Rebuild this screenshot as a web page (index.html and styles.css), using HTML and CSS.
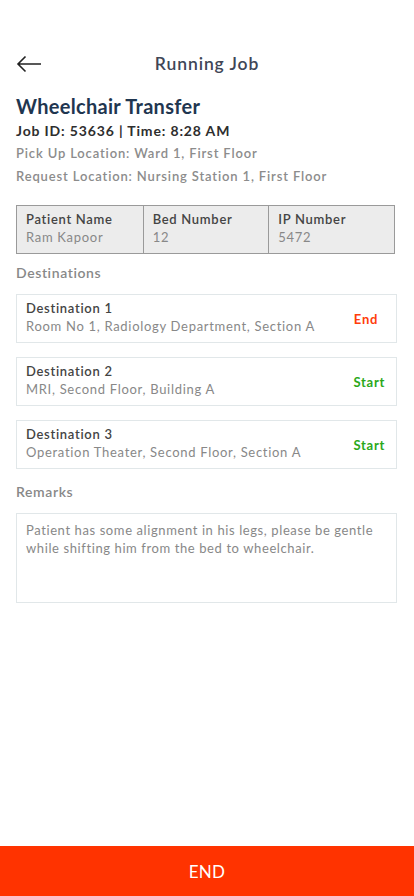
FILE: index.html
```html
<!DOCTYPE html>
<html>
<head>
<meta charset="utf-8">
<link rel="stylesheet" href="styles.css">
</head>
<body>
<div class="page">
  <header class="topbar">
    <span class="back">
      <svg width="26" height="18" viewBox="0 0 26 18"><path d="M25 9H2M9.5 1.5L2 9l7.5 7.5" fill="none" stroke="#222" stroke-width="1.6"/></svg>
    </span>
    <h1 class="title">Running Job</h1>
  </header>
  <main class="content">
    <h2 class="job-name">Wheelchair Transfer</h2>
    <div class="job-id">Job ID: 53636 | Time: 8:28 AM</div>
    <div class="meta">Pick Up Location: Ward 1, First Floor</div>
    <div class="meta">Request Location: Nursing Station 1, First Floor</div>

    <div class="info-table">
      <div class="cell"><div class="cell-h">Patient Name</div><div class="cell-v">Ram Kapoor</div></div>
      <div class="cell"><div class="cell-h">Bed Number</div><div class="cell-v">12</div></div>
      <div class="cell"><div class="cell-h">IP Number</div><div class="cell-v">5472</div></div>
    </div>

    <div class="section-label">Destinations</div>
    <div class="dest-list">
      <div class="dest">
        <div class="dest-text"><div class="dest-title">Destination 1</div><div class="dest-addr">Room No 1, Radiology Department, Section A</div></div>
        <span class="action end">End</span>
      </div>
      <div class="dest">
        <div class="dest-text"><div class="dest-title">Destination 2</div><div class="dest-addr">MRI, Second Floor, Building A</div></div>
        <span class="action start">Start</span>
      </div>
      <div class="dest">
        <div class="dest-text"><div class="dest-title">Destination 3</div><div class="dest-addr">Operation Theater, Second Floor, Section A</div></div>
        <span class="action start">Start</span>
      </div>
    </div>

    <div class="section-label remarks-label">Remarks</div>
    <div class="remarks">Patient has some alignment in his legs, please be gentle while shifting him from the bed to wheelchair.</div>
  </main>
  <button class="end-btn">END</button>
</div>
</body>
</html>
```
FILE: styles.css
```css
* { box-sizing: border-box; }
html, body { margin: 0; padding: 0; }
body {
  font-family: Lato, "Noto Sans", sans-serif;
  background: #fff;
  color: #333;
  letter-spacing: 0.7px;
}
.page {
  width: 414px;
  height: 896px;
  display: flex;
  flex-direction: column;
}
.topbar {
  position: relative;
  height: 40px;
  margin-top: 44px;
  display: flex;
  align-items: center;
  justify-content: center;
}
.back {
  position: absolute;
  left: 16px;
  top: 11px;
  width: 26px;
  height: 18px;
}
.back svg { display: block; }
.title {
  margin: 0;
  font-size: 17.5px;
  font-weight: 600;
  color: #404657;
  line-height: 40px;
  letter-spacing: 0.9px;
}
.content {
  padding: 8px 17px 0 16px;
}
.job-name {
  margin: 0;
  font-size: 20px;
  font-weight: 700;
  color: #1f3650;
  line-height: 28px;
  letter-spacing: 0.3px;
}
.job-id {
  font-size: 14px;
  font-weight: 700;
  color: #2e2e2e;
  line-height: 22px;
  letter-spacing: 0.85px;
}
.meta {
  font-size: 13px;
  font-weight: 600;
  color: #8c8c8c;
  line-height: 23px;
  letter-spacing: 0.85px;
}
.info-table {
  display: grid;
  grid-template-columns: repeat(3, 1fr);
  width: 379px;
  margin-top: 17px;
  border: 1px solid #9a9a9a;
  background: #ececec;
}
.cell {
  padding: 4px 9px 7px;
  border-left: 1px solid #9a9a9a;
}
.cell:first-child { border-left: none; }
.cell-h {
  font-size: 13px;
  font-weight: 600;
  color: #444;
  line-height: 18px;
}
.cell-v {
  font-size: 13px;
  color: #888;
  line-height: 18px;
}
.section-label {
  font-size: 14px;
  font-weight: 600;
  color: #888;
  margin-top: 10px;
  line-height: 18px;
  letter-spacing: 0.6px;
}
.dest-list {
  display: flex;
  flex-direction: column;
  gap: 14px;
  margin-top: 12px;
}
.dest {
  height: 49px;
  border: 1px solid #e1e7e9;
  display: flex;
  align-items: center;
  justify-content: space-between;
  padding: 0 11px 0 9px;
}
.dest-text {
  margin-top: -3px;
}
.dest-title {
  font-size: 13px;
  font-weight: 600;
  color: #444;
  line-height: 18px;
}
.dest-addr {
  font-size: 13px;
  color: #888;
  line-height: 18px;
}
.action {
  font-size: 13px;
  font-weight: 700;
}
.action.end { color: #ff3d0a; margin-right: 7px; }
.action.start { color: #2aa81a; }
.remarks-label { margin-top: 14px; }
.remarks {
  margin-top: 12px;
  height: 90px;
  border: 1px solid #e1e7e9;
  padding: 7px 9px;
  font-size: 13px;
  line-height: 18px;
  color: #888;
  letter-spacing: 0.6px;
}
.end-btn {
  margin-top: auto;
  height: 50px;
  width: 100%;
  border: none;
  background: #ff3300;
  color: #fff;
  font-family: Lato, "Noto Sans", sans-serif;
  font-size: 17px;
  font-weight: 400;
  letter-spacing: 0.3px;
  padding: 0;
}
```
